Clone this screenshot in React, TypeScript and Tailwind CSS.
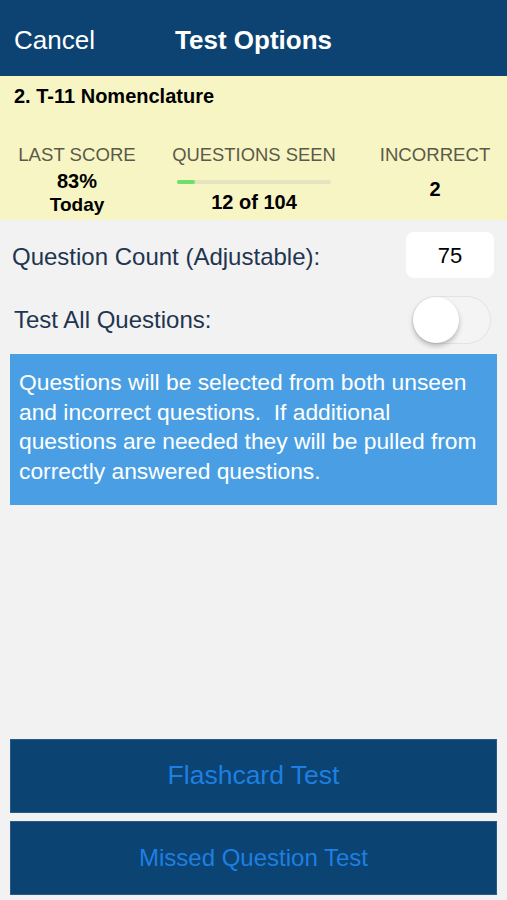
import React from "react";

const STATS_FONT = { fontFamily: '"Liberation Sans", Arial, sans-serif' };

function Toggle() {
  return (
    <div className="relative h-[48px] w-[79px] rounded-full border border-[#e3e3e3] bg-[#f4f4f4]">
      <div className="absolute left-0 top-[0px] h-[46px] w-[46px] rounded-full bg-white shadow-[0_3px_5px_rgba(0,0,0,0.25)]" />
    </div>
  );
}

export default function App() {
  return (
    <div className="flex h-[900px] w-full flex-col bg-[#f2f2f2]" style={STATS_FONT}>
      {/* nav bar */}
      <header className="grid h-[76px] grid-cols-[1fr_auto_1fr] items-center bg-[#0c4372] pt-[4px] text-white">
        <span className="pl-[14px] text-[26px] leading-[30px]">Cancel</span>
        <h1 className="text-[26px] font-bold leading-[30px]">Test Options</h1>
        <span />
      </header>

      {/* summary */}
      <section className="h-[144px] bg-[#f7f5c4] pt-[8px]">
        <h2 className="pl-[14px] text-[20px] font-bold leading-[24px] text-black">2. T-11 Nomenclature</h2>
        <div className="mt-[36px] grid grid-cols-[154px_200px_153px] text-center">
          <div className="flex flex-col items-center">
            <span className="text-[18.6px] leading-[22px] text-[#5b5a48]">LAST SCORE</span>
            <span className="mt-[3px] text-[20px] font-bold leading-[24px] text-black">83%</span>
            <span className="text-[19px] font-bold leading-[24px] text-black">Today</span>
          </div>
          <div className="flex flex-col items-center">
            <span className="text-[18.4px] leading-[22px] text-[#5b5a48]">QUESTIONS SEEN</span>
            <div className="mt-[14px] h-[4px] w-[154px] rounded-full bg-[#e6e3c0]">
              <div className="h-full w-[18px] rounded-full bg-[#6ee06a]" />
            </div>
            <span className="mt-[6px] text-[20px] font-bold leading-[24px] text-black">12 of 104</span>
          </div>
          <div className="flex flex-col items-center pl-[9px]">
            <span className="text-[18.6px] leading-[22px] text-[#5b5a48]">INCORRECT</span>
            <span className="mt-[11px] text-[20px] font-bold leading-[24px] text-black">2</span>
          </div>
        </div>
      </section>

      {/* options */}
      <div className="flex items-center justify-between pl-[12px] pr-[13px] pt-[12px]">
        <span className="pt-[3px] text-[24px] leading-[28px] text-[#1f3550]">Question Count (Adjustable):</span>
        <div className="flex h-[46px] w-[88px] items-center justify-center rounded-[8px] bg-white text-[22px] text-black">
          75
        </div>
      </div>
      <div className="mt-[18px] flex items-center justify-between pl-[14px] pr-[16px]">
        <span className="text-[24px] leading-[28px] text-[#1f3550]">Test All Questions:</span>
        <Toggle />
      </div>

      <div className="mx-[10px] mt-[10px] h-[151px] bg-[#4a9fe4] pl-[9px] pt-[14px] text-[22.8px] leading-[29.5px] whitespace-nowrap text-white">
        Questions will be selected from both unseen
        <br />
        and incorrect questions.&nbsp; If additional
        <br />
        questions are needed they will be pulled from
        <br />
        correctly answered questions.
      </div>

      <div className="flex-1" />

      {/* actions */}
      <div className="flex flex-col gap-[8px] px-[10px] pb-[5px]">
        <button className="h-[74px] border border-[#2a5a85] bg-[#0b4372] text-[26.5px] text-[#1e7fe3]">Flashcard Test</button>
        <button className="h-[74px] border border-[#2a5a85] bg-[#0b4372] text-[24px] text-[#1e7fe3]">Missed Question Test</button>
      </div>
    </div>
  );
}
